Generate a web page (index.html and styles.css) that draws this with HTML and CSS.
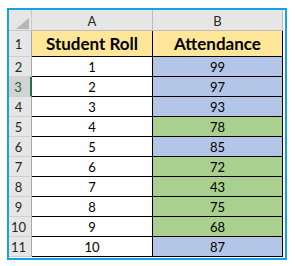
FILE: index.html
```html
<!DOCTYPE html>
<html>
<head>
<meta charset="utf-8">
<link rel="stylesheet" href="styles.css">
</head>
<body>
<div class="frame">
  <div class="sheet">
    <div class="corner"><span class="tri"></span></div>
    <div class="colhead">A</div>
    <div class="colhead">B</div>

    <div class="rowhead">1</div>
    <div class="cell title">Student Roll</div>
    <div class="cell title">Attendance</div>

    <div class="rowhead">2</div>
    <div class="cell">1</div>
    <div class="cell blue">99</div>

    <div class="rowhead sel">3</div>
    <div class="cell">2</div>
    <div class="cell blue">97</div>

    <div class="rowhead">4</div>
    <div class="cell">3</div>
    <div class="cell blue">93</div>

    <div class="rowhead">5</div>
    <div class="cell">4</div>
    <div class="cell green">78</div>

    <div class="rowhead">6</div>
    <div class="cell">5</div>
    <div class="cell blue">85</div>

    <div class="rowhead">7</div>
    <div class="cell">6</div>
    <div class="cell green">72</div>

    <div class="rowhead">8</div>
    <div class="cell">7</div>
    <div class="cell green">43</div>

    <div class="rowhead">9</div>
    <div class="cell">8</div>
    <div class="cell green">75</div>

    <div class="rowhead">10</div>
    <div class="cell">9</div>
    <div class="cell green">68</div>

    <div class="rowhead">11</div>
    <div class="cell">10</div>
    <div class="cell blue">87</div>
  </div>
</div>
</body>
</html>
```

FILE: styles.css
```css
* { box-sizing: border-box; }

html, body {
  margin: 0;
  padding: 0;
  background: #ffffff;
}

body {
  font-family: Lato, "Open Sans", "Liberation Sans", sans-serif;
  color: #000;
}

.frame {
  margin: 8px 0 0 7px;
  width: 280px;
  border: 2px solid #12a3e8;
  padding: 0 2px 1px 0;
}

.sheet {
  display: grid;
  grid-template-columns: 23px 121px 130px;
  grid-template-rows: 21px 26px repeat(10, 20px);
}

.corner {
  background: #e6e6e6;
  border-right: 1px solid #c9c9c9;
  border-bottom: 1px solid #c9c9c9;
  display: flex;
  justify-content: flex-end;
  align-items: flex-end;
  padding: 0 2px 1px 0;
}

.tri {
  width: 0;
  height: 0;
  border-left: 13px solid transparent;
  border-bottom: 11px solid #b6b6b6;
}

.colhead {
  background: #e6e6e6;
  border-right: 1px solid #bcbcbc;
  border-bottom: 1px solid #bcbcbc;
  display: flex;
  align-items: center;
  justify-content: center;
  font-size: 13px;
  color: #262626;
  padding-top: 1px;
}

.rowhead {
  background: #e6e6e6;
  border-right: 1px solid #a8a8a8;
  border-bottom: 1px solid #cfcfcf;
  display: flex;
  align-items: center;
  justify-content: center;
  font-size: 13px;
  color: #262626;
  padding-right: 3px;
}

.rowhead.sel {
  background: #d3d3d3;
  color: #1f5f3f;
  border-right: 2px solid #217346;
}

.cell {
  border-right: 1px solid #000;
  border-bottom: 1px solid #000;
  display: flex;
  align-items: center;
  justify-content: center;
  font-size: 13px;
  background: #fff;
}

.cell.title {
  background: #ffe699;
  font-weight: bold;
  font-size: 17px;
}

.cell.blue { background: #b4c6e7; }
.cell.green { background: #a9d08e; }
```
